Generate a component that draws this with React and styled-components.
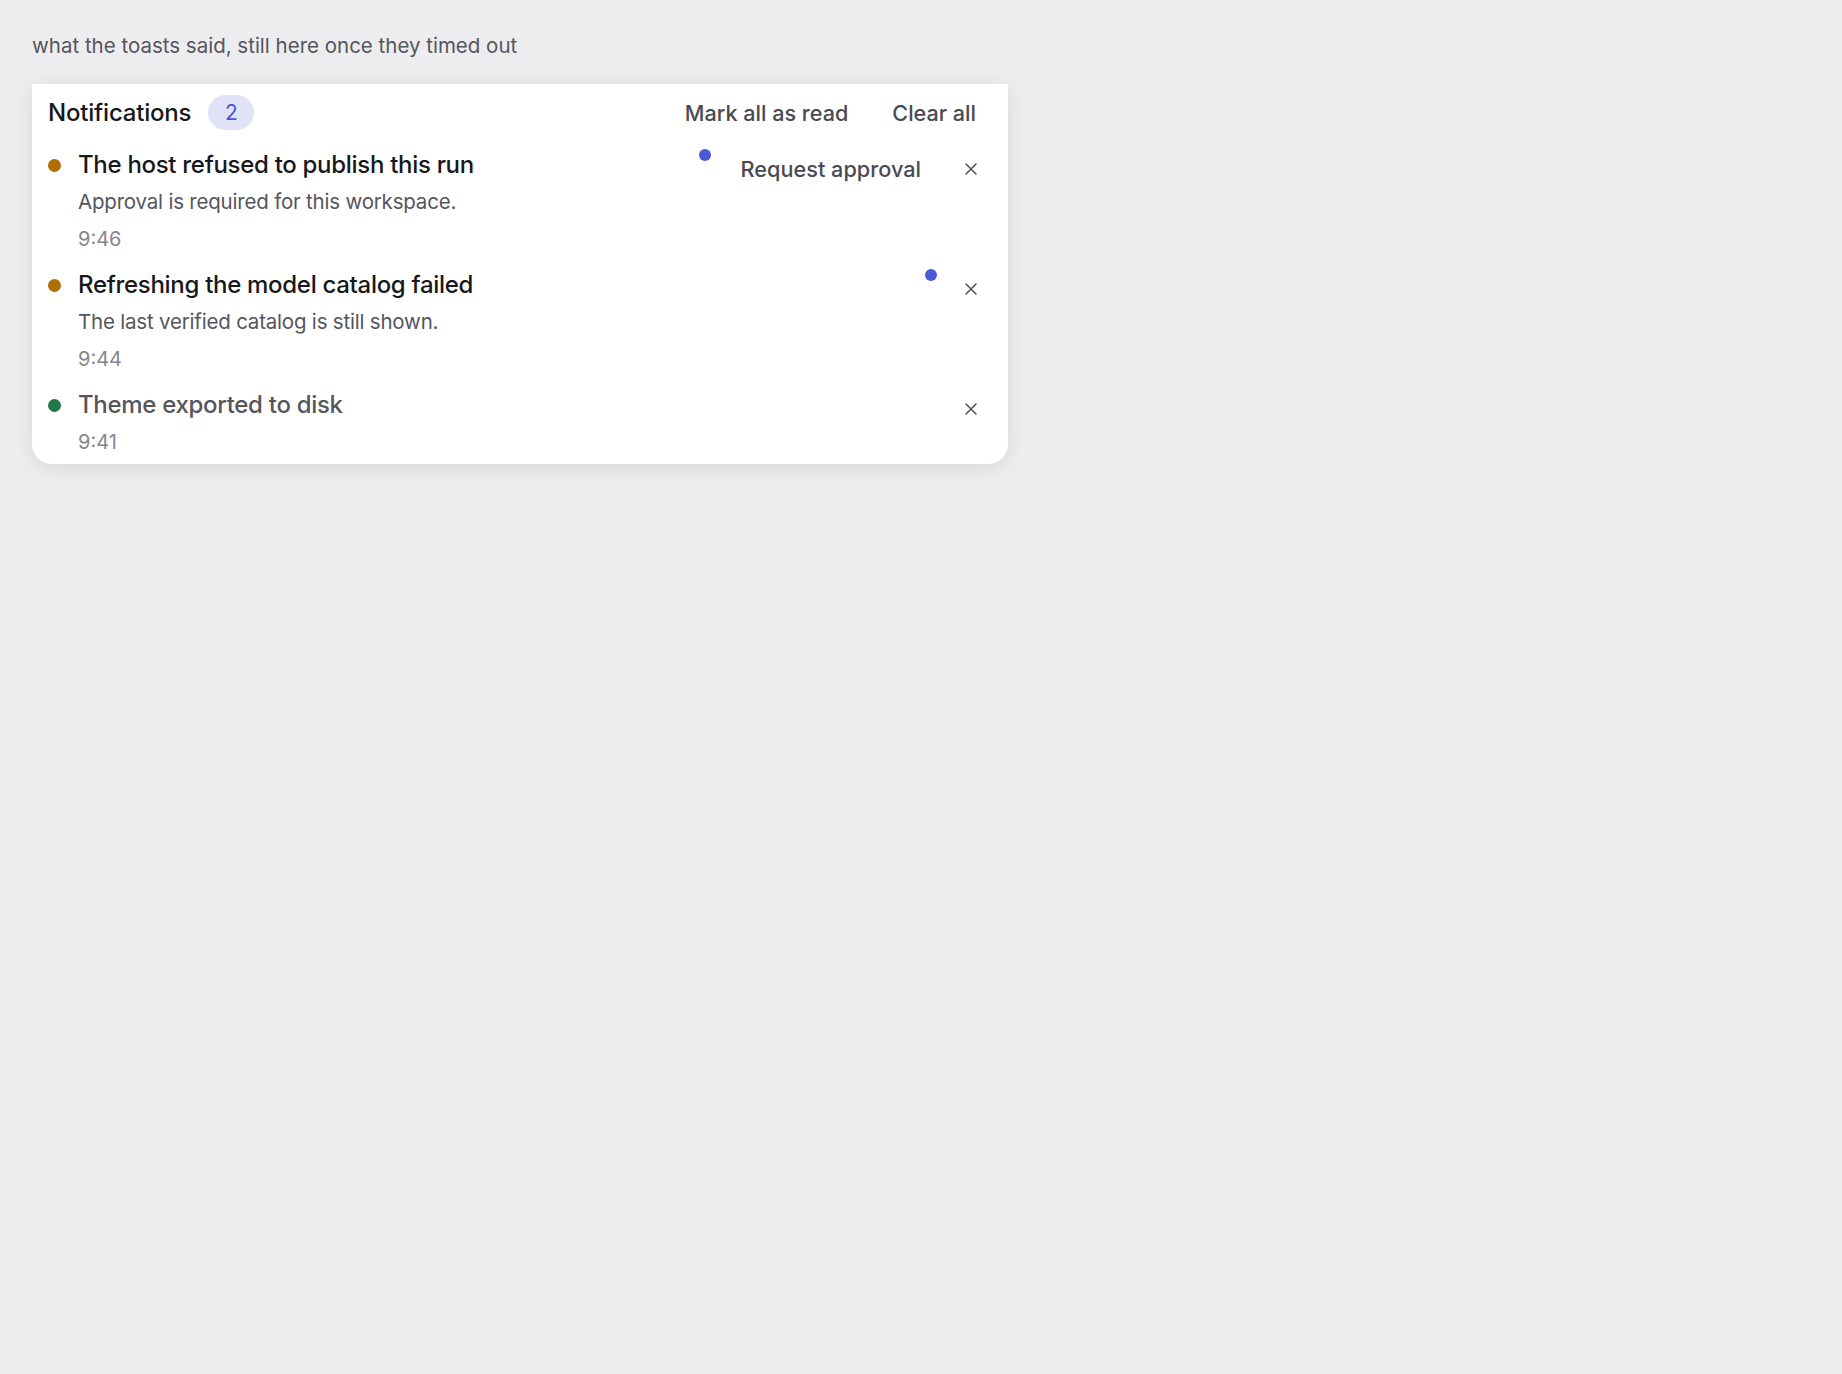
import styled, { createGlobalStyle } from "styled-components"

const GlobalStyle = createGlobalStyle`
  html, body {
    margin: 0;
    background: #ededef;
    font-family: Inter, "Noto Sans", sans-serif;
  }
`;

const notifications = [
  {
    id: 1,
    tone: "warn",
    title: "The host refused to publish this run",
    body: "Approval is required for this workspace.",
    time: "9:46",
    unread: true,
    action: "Request approval",
  },
  {
    id: 2,
    tone: "warn",
    title: "Refreshing the model catalog failed",
    body: "The last verified catalog is still shown.",
    time: "9:44",
    unread: true,
  },
  {
    id: 3,
    tone: "ok",
    title: "Theme exported to disk",
    time: "9:41",
    unread: false,
  },
];

const CloseIcon = () => (
  <svg width="14" height="14" viewBox="0 0 14 14" fill="none">
    <path d="M2 2L12 12M12 2L2 12" stroke="currentColor" strokeWidth="1.6" strokeLinecap="round" />
  </svg>
);

const App = () => {
  const unreadCount = notifications.filter((n) => n.unread).length;
  return (
    <Page>
      <GlobalStyle />
      <Caption>what the toasts said, still here once they timed out</Caption>
      <Panel>
        <Header>
          <HeaderTitle>
            Notifications
            <Badge>{unreadCount}</Badge>
          </HeaderTitle>
          <HeaderActions>
            <TextButton>Mark all as read</TextButton>
            <TextButton>Clear all</TextButton>
          </HeaderActions>
        </Header>

        <List>
          {notifications.map((n) => (
            <Item key={n.id}>
              <StatusDot $tone={n.tone} />
              <Content>
                <Title $unread={n.unread}>{n.title}</Title>
                {n.body && <Body>{n.body}</Body>}
                <Time>{n.time}</Time>
              </Content>
              <Actions>
                {n.unread && <UnreadDot />}
                {n.action && <ActionButton>{n.action}</ActionButton>}
                <CloseButton aria-label="Dismiss">
                  <CloseIcon />
                </CloseButton>
              </Actions>
            </Item>
          ))}
        </List>
      </Panel>
    </Page>
  );
};

export default App;

const Page = styled.div`
  padding: 30px 32px;
  display: flex;
  flex-direction: column;
  align-items: flex-start;
`;

const Caption = styled.p`
  margin: 0 0 22px;
  font-size: 20.5px;
  line-height: 32px;
  color: #55555d;
`;

const Panel = styled.section`
  width: 976px;
  background: #fff;
  border-radius: 0 0 20px 20px;
  box-shadow: 0 4px 18px rgba(20, 20, 30, 0.09);
`;

const Header = styled.header`
  height: 57px;
  display: flex;
  align-items: center;
  justify-content: space-between;
  padding: 0 32px 0 16px;
`;

const HeaderTitle = styled.h2`
  margin: 0;
  display: flex;
  align-items: center;
  gap: 17px;
  font-size: 24px;
  font-weight: 500;
  letter-spacing: -0.2px;
  color: #18181c;
`;

const Badge = styled.span`
  min-width: 46px;
  height: 35px;
  padding: 0 14px;
  box-sizing: border-box;
  border-radius: 18px;
  display: inline-flex;
  align-items: center;
  justify-content: center;
  background: #e1e2f7;
  color: #4a55d6;
  font-size: 21px;
  font-weight: 400;
  letter-spacing: 0;
`;

const HeaderActions = styled.div`
  display: flex;
  align-items: center;
  gap: 44px;
`;

const TextButton = styled.button`
  border: none;
  background: none;
  padding: 0;
  font-family: inherit;
  font-size: 21.6px;
  font-weight: 500;
  color: #4a4a52;
  cursor: pointer;
`;

const List = styled.div`
  display: flex;
  flex-direction: column;
`;

const Item = styled.div`
  display: flex;
  align-items: flex-start;
  gap: 17px;
  padding: 8px 23px 6px 16px;
`;

const StatusDot = styled.span`
  flex: none;
  width: 13px;
  height: 13px;
  margin-top: 10px;
  border-radius: 50%;
  background: ${(p) => (p.$tone === "ok" ? "#1f7a48" : "#b06f00")};
`;

const Content = styled.div`
  flex: 1;
  display: flex;
  flex-direction: column;
  gap: 5px;
`;

const Title = styled.div`
  font-size: 24px;
  font-weight: 500;
  line-height: 32px;
  letter-spacing: -0.3px;
  color: ${(p) => (p.$unread ? "#18181c" : "#55555d")};
`;

const Body = styled.div`
  font-size: 20.5px;
  line-height: 32px;
  letter-spacing: -0.2px;
  color: #55555d;
`;

const Time = styled.div`
  font-size: 20px;
  line-height: 32px;
  color: #85858d;
`;

const Actions = styled.div`
  display: flex;
  align-items: flex-start;
  gap: 20px;
`;

const UnreadDot = styled.span`
  flex: none;
  width: 12px;
  height: 12px;
  border-radius: 50%;
  background: #4b58d8;
`;

const ActionButton = styled.button`
  border: none;
  background: none;
  height: 40px;
  padding: 0 16px 0 10px;
  font-family: inherit;
  font-size: 21.7px;
  font-weight: 500;
  color: #4a4a52;
  cursor: pointer;
`;

const CloseButton = styled.button`
  border: none;
  background: none;
  width: 28px;
  height: 40px;
  padding: 0;
  display: flex;
  align-items: center;
  justify-content: center;
  color: #55555d;
  cursor: pointer;
`;
